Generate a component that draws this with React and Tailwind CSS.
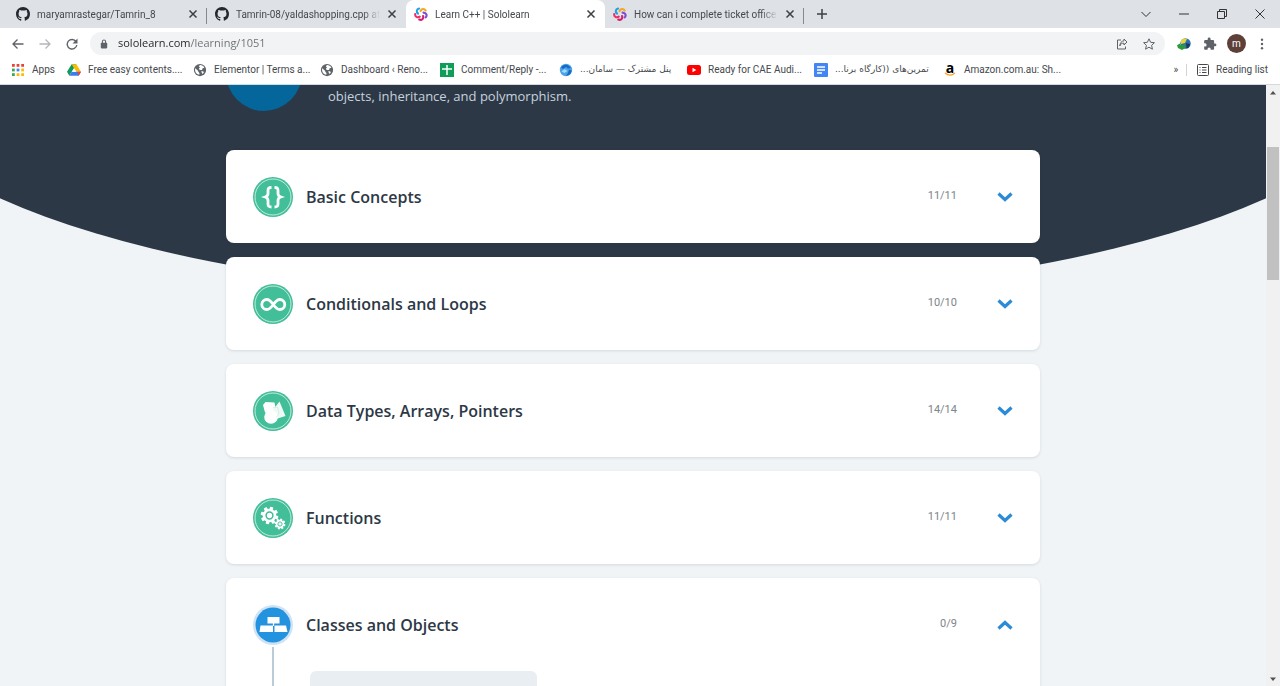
import { useState } from "react";

const UI_FONT = "font-['Roboto','DejaVu_Sans',sans-serif]";
const PAGE_FONT = "font-['Open_Sans',sans-serif]";

function GithubIcon() {
  return (
    <svg viewBox="0 0 16 16" className="size-3.5 shrink-0" fill="#24292f" aria-hidden="true">
      <path d="M8 0C3.58 0 0 3.58 0 8c0 3.54 2.29 6.53 5.47 7.59.4.07.55-.17.55-.38 0-.19-.01-.82-.01-1.49-2.01.37-2.53-.49-2.69-.94-.09-.23-.48-.94-.82-1.13-.28-.15-.68-.52-.01-.53.63-.01 1.08.58 1.23.82.72 1.21 1.87.87 2.33.66.07-.52.28-.87.51-1.07-1.78-.2-3.64-.89-3.64-3.95 0-.87.31-1.59.82-2.15-.08-.2-.36-1.02.08-2.12 0 0 .67-.21 2.2.82.64-.18 1.32-.27 2-.27s1.36.09 2 .27c1.53-1.04 2.2-.82 2.2-.82.44 1.1.16 1.92.08 2.12.51.56.82 1.27.82 2.15 0 3.07-1.87 3.75-3.65 3.95.29.25.54.73.54 1.48 0 1.07-.01 1.93-.01 2.2 0 .21.15.46.55.38A8.01 8.01 0 0 0 16 8c0-4.42-3.58-8-8-8z" />
    </svg>
  );
}

function SololearnIcon() {
  const petals = [
    ["#f8a51b", 10],
    ["#7b4fd0", 82],
    ["#d81b72", 154],
    ["#ee2f5f", 226],
    ["#1da1e8", 298],
  ];
  return (
    <svg viewBox="0 0 28 28" className="size-3.5 shrink-0" fill="none" strokeWidth="4.2" strokeLinecap="round" aria-hidden="true">
      {petals.map(([color, angle]) => (
        <path key={color} d="M12 8.500C13 3 18.500 1.500 22 5.500" stroke={color} transform={`rotate(${angle} 14 14)`} />
      ))}
    </svg>
  );
}

function DriveIcon() {
  return (
    <svg viewBox="0 0 24 22" className="size-3.5 shrink-0" aria-hidden="true">
      <path d="M8 1h8l-4 7-4.500 7L4 21 0 14z" fill="#0f9d58" />
      <path d="M8 1h8l8 13h-8z" fill="#fbbc04" />
      <path d="M8 14h16l-4 7H4z" fill="#3b7ded" />
      <path d="M18 14h6l-4 7z" fill="#ea4335" />
      <path d="M12 8l3.500 6h-7z" fill="#fff" />
    </svg>
  );
}

function GlobeIcon() {
  return (
    <svg viewBox="0 0 24 24" className="size-3.5 shrink-0" aria-hidden="true">
      <circle cx="12" cy="12" r="10.500" fill="#5f6368" />
      <path d="M3.500 12c0-1 .2-2 .5-3l5 4.500v1.500l2 2v3C6.500 20 3.500 16.500 3.500 12zM12 3.500c3.500 0 6 1.800 7.500 4.500l-3 1-1 3h-4l-1.500-2.500 2-1.500-2-2.500z" fill="#fff" />
      <path d="M14 14h3.500l1 2.500-2.500 2.500z" fill="#fff" />
    </svg>
  );
}

function SheetsIcon() {
  return (
    <svg viewBox="0 0 14 14" className="size-3.5 shrink-0" aria-hidden="true">
      <path d="M0 0h14v14H0z" fill="#0f9d58" />
      <path d="M7 2v10M2 6h10" stroke="#fff" strokeWidth="1.500" />
    </svg>
  );
}

function SwirlIcon() {
  return (
    <svg viewBox="0 0 14 14" className="size-3.5 shrink-0" aria-hidden="true">
      <circle cx="7" cy="7" r="6.200" fill="#4ba3ea" />
      <path d="M2 4.500c2-3 6-3.500 8-1.500l2 2-3 .5-2-1.500-3 2zM7 12.500c3 0 5.500-2 5.500-5L10 6.500 9 10z" fill="#1769c2" />
      <path d="M2.500 8.500l3-2.500 3 2-3 2z" fill="#a8d8fb" />
    </svg>
  );
}

function YoutubeIcon() {
  return (
    <svg viewBox="0 0 14 14" className="size-3.5 shrink-0" aria-hidden="true">
      <rect y="2" width="14" height="10" rx="2.500" fill="#f00" />
      <path d="M5.500 4.800v4.400L9.300 7z" fill="#fff" />
    </svg>
  );
}

function DocsIcon() {
  return (
    <svg viewBox="0 0 14 14" className="size-3.5 shrink-0" aria-hidden="true">
      <rect width="14" height="14" rx="1" fill="#4285f4" />
      <path d="M3 4h8M3 7h8M3 10h5" stroke="#fff" strokeWidth="1.400" />
    </svg>
  );
}

function AmazonIcon() {
  return (
    <span className="flex size-3.5 shrink-0 flex-col items-center" aria-hidden="true">
      <span className="font-['Open_Sans',sans-serif] text-sm/[9px] font-bold text-black">a</span>
      <svg viewBox="0 0 12 4" className="h-1 w-3" fill="none" stroke="#f7a11a" strokeWidth="1.300">
        <path d="M1 1c3 2.500 7 2.500 10 0" />
      </svg>
    </span>
  );
}

function AppsIcon() {
  const colors = ["#ea4335", "#ea4335", "#ea4335", "#34a853", "#4285f4", "#fbbc04", "#34a853", "#fbbc04", "#fbbc04"];
  return (
    <svg viewBox="0 0 13 13" className="size-3 shrink-0" aria-hidden="true">
      {colors.map((c, i) => (
        <rect key={i} x={(i % 3) * 5} y={Math.floor(i / 3) * 5} width="3" height="3" fill={c} />
      ))}
    </svg>
  );
}

function LineIcon({ d, className = "size-3", width = 1.5 }) {
  return (
    <svg viewBox="0 0 12 12" className={className} fill="none" stroke="currentColor" strokeWidth={width} aria-hidden="true">
      <path d={d} />
    </svg>
  );
}

const tabs = [
  { title: "maryamrastegar/Tamrin_8", icon: <GithubIcon />, divider: true },
  { title: "Tamrin-08/yaldashopping.cpp at", icon: <GithubIcon /> },
  { title: "Learn C++ | Sololearn", icon: <SololearnIcon />, active: true },
  { title: "How can i complete ticket office", icon: <SololearnIcon />, divider: true },
];

function Tab({ title, icon, active, divider }) {
  return (
    <div className={`relative flex h-7 w-[199px] min-w-0 items-center pr-2 pl-2 ${active ? "rounded-t-lg bg-white" : ""}`}>
      <button className="flex min-w-0 flex-1 items-center gap-[7px] text-left">
        {icon}
        <span className="flex-1 overflow-hidden text-[10px] whitespace-nowrap text-[#45494d] [mask-image:linear-gradient(to_right,black_88%,transparent)]">
          {title}
        </span>
      </button>
      <button aria-label={`Close ${title}`} className="ml-1.5 flex size-3 items-center justify-center text-[#3c4043]">
        <LineIcon d="M2.500 2.500l7 7M9.500 2.500l-7 7" />
      </button>
      {divider && <span className="absolute top-2 right-0 h-4 w-px bg-[#85898e]" />}
    </div>
  );
}

function TabStrip() {
  return (
    <div className="flex h-7 items-center bg-[#dee1e6] pl-2">
      {tabs.map((t) => (
        <Tab key={t.title} {...t} />
      ))}
      <button aria-label="New tab" className="ml-3 text-[#3c4043]">
        <LineIcon d="M6 1v10M1 6h10" />
      </button>
      <div className="ml-auto flex items-center gap-[26px] pr-3.5 text-[#333]">
        <button aria-label="Search tabs"><LineIcon d="M1.500 4l4.500 4.500L10.500 4" width={1} /></button>
        <button aria-label="Minimize"><LineIcon d="M1 6h10" width={1} /></button>
        <button aria-label="Restore"><LineIcon d="M1.500 3.500h7v7h-7zM3.500 3.500v-2h7v7h-2" width={1} /></button>
        <button aria-label="Close window"><LineIcon d="M1.500 1.500l9 9M10.500 1.500l-9 9" width={1} /></button>
      </div>
    </div>
  );
}

function Toolbar() {
  return (
    <div className="flex h-[31px] items-center bg-white pr-3 pl-3 text-[#5f6368]">
      <button aria-label="Back"><LineIcon d="M11.500 6H1M5.500 1.500L1 6l4.500 4.500" width={1.3} /></button>
      <button aria-label="Forward" className="ml-[15px] text-[#b4b7ba]"><LineIcon d="M.5 6H11M6.500 1.500L11 6l-4.500 4.500" width={1.3} /></button>
      <button aria-label="Reload" className="ml-[15px]">
        <svg viewBox="0 0 12 12" className="size-3" aria-hidden="true">
          <path d="M10 3.500A4.800 4.800 0 1 0 10.800 7" fill="none" stroke="currentColor" strokeWidth="1.400" />
          <path d="M11.500.5v5h-5z" fill="currentColor" />
        </svg>
      </button>
      <div className="ml-3 flex h-[23px] min-w-0 flex-1 items-center rounded-full bg-[#f1f3f4] pr-2.5 pl-2.5">
        <svg viewBox="0 0 10 12" className="h-2.5 w-2" aria-hidden="true">
          <rect x="1" y="4.500" width="8" height="7" rx="1" fill="currentColor" />
          <path d="M3 5V3a2 2 0 0 1 4 0v2" fill="none" stroke="currentColor" strokeWidth="1.300" />
        </svg>
        <input
          aria-label="Address"
          defaultValue="sololearn.com/learning/1051"
          className="ml-2.5 min-w-0 flex-1 bg-[linear-gradient(to_right,#202124_72px,#6b6f73_72px)] bg-clip-text font-['Open_Sans',sans-serif] text-[11px] text-transparent outline-none"
        />
        <button aria-label="Share" className="mr-[15px]">
          <LineIcon d="M5 2H1.500v9h8V8.500M8 1l3 3-3 3V5.200C5.500 5.200 4.500 6 3.800 8 4 4.800 5.500 3 8 2.800z" width={1} />
        </button>
        <button aria-label="Bookmark this page">
          <LineIcon d="M6 .8l1.600 3.500 3.800.4-2.800 2.600.8 3.900L6 9.200l-3.400 2 .8-3.900L.6 4.700l3.800-.4z" width={1} />
        </button>
      </div>
      <div className="ml-3 flex items-center">
        <button aria-label="Download manager">
          <svg viewBox="0 0 14 12" className="h-3 w-3.5" aria-hidden="true">
            <circle cx="8.500" cy="5.500" r="5.200" fill="#2f6fb5" />
            <path d="M4 2.500c2-2 5-2.500 6-1.500L8 5 4 6z" fill="#e6d832" />
            <path d="M9 5l4 1c0 2.500-1.500 4-3.500 4.500z" fill="#163a63" />
            <path d="M0 7.500l2.500-2L4 7.500l4-1 .5 3.500L5 12 1 10z" fill="#2d9b34" />
          </svg>
        </button>
        <button aria-label="Extensions" className="ml-3">
          <svg viewBox="0 0 24 24" className="size-3.5" fill="currentColor" aria-hidden="true">
            <path d="M20.500 11H19V7c0-1.100-.9-2-2-2h-4V3.500a2.500 2.500 0 0 0-5 0V5H4c-1.100 0-2 .9-2 2v3.800h1.500a2.700 2.700 0 0 1 0 5.400H2V20c0 1.100.9 2 2 2h3.800v-1.500a2.700 2.700 0 0 1 5.400 0V22H17c1.100 0 2-.9 2-2v-4h1.500a2.500 2.500 0 0 0 0-5z" />
          </svg>
        </button>
        <button aria-label="Profile" className="ml-2.5 flex size-[19px] items-center justify-center rounded-full bg-[#5d4037] text-[10px] leading-none text-white">m</button>
        <button aria-label="Menu" className="ml-2.5">
          <svg viewBox="0 0 12 12" className="size-3" fill="currentColor" aria-hidden="true">
            <circle cx="6" cy="1.800" r="1.200" /><circle cx="6" cy="6" r="1.200" /><circle cx="6" cy="10.200" r="1.200" />
          </svg>
        </button>
      </div>
    </div>
  );
}

const bookmarks = [
  { label: "Free easy contents....", icon: <DriveIcon />, box: "w-[126px]" },
  { label: "Elementor | Terms a...", icon: <GlobeIcon />, box: "w-[127px]" },
  { label: "Dashboard ‹ Reno...", icon: <GlobeIcon />, box: "w-[120px]" },
  { label: "Comment/Reply -...", icon: <SheetsIcon />, box: "w-[119px]" },
  { label: "پنل مشترک — سامان...", icon: <SwirlIcon />, box: "w-[128px]", rtl: true },
  { label: "Ready for CAE Audi...", icon: <YoutubeIcon />, box: "w-[127px]" },
  { label: "تمرین‌های ((کارگاه برنا...", icon: <DocsIcon />, box: "w-[129px]", rtl: true },
  { label: "Amazon.com.au: Sh...", icon: <AmazonIcon />, box: "w-[127px]" },
];

function BookmarksBar() {
  return (
    <nav aria-label="Bookmarks" className="flex h-[26px] items-center border-b border-[#d5d8dc] bg-white pb-1 pl-3 text-[10px] whitespace-nowrap text-[#45494d]">
      <a href="#apps" className="flex w-[55px] shrink-0 items-center gap-2">
        <AppsIcon />
        <span>Apps</span>
      </a>
      {bookmarks.map((b) => (
        <a key={b.label} href="#bookmark" className={`flex shrink-0 items-center gap-[7px] ${b.box}`}>
          {b.icon}
          <span dir={b.rtl ? "rtl" : "ltr"} className={b.rtl ? "font-['DejaVu_Sans',sans-serif] text-[9px]" : ""}>{b.label}</span>
        </a>
      ))}
      <div className="ml-auto flex items-center pr-3">
        <button aria-label="More bookmarks">»</button>
        <span className="ml-2 h-3 w-px bg-[#d0d3d7]" />
        <button className="ml-2.5 flex items-center gap-[7px]">
          <svg viewBox="0 0 12 12" className="size-3" fill="none" stroke="currentColor" aria-hidden="true">
            <rect x=".5" y=".5" width="11" height="11" rx="1" />
            <path d="M2.500 3.500h1M5 3.500h4.500M2.500 6h1M5 6h4.500M2.500 8.500h1M5 8.500h4.500" />
          </svg>
          <span>Reading list</span>
        </button>
      </div>
    </nav>
  );
}

function Badge({ children, active }) {
  return (
    <svg viewBox="0 0 40 40" className="size-10 shrink-0" aria-hidden="true">
      {active ? (
        <>
          <circle cx="20" cy="20" r="20" fill="#cfe3f4" />
          <circle cx="20" cy="20" r="17.500" fill="#2493df" />
        </>
      ) : (
        <>
          <circle cx="20" cy="20" r="20" fill="#42be98" />
          <circle cx="20" cy="20" r="18" fill="none" stroke="#c4eadd" strokeWidth="1" />
        </>
      )}
      {children}
    </svg>
  );
}

function Gear({ cx, cy, r, hole }) {
  return (
    <g transform={`translate(${cx} ${cy})`}>
      {[0, 45, 90, 135].map((a) => (
        <rect key={a} x={-r * 0.25} y={-r * 1.3} width={r * 0.5} height={r * 2.6} rx={r * 0.1} fill="#fff" transform={`rotate(${a + 15})`} />
      ))}
      <circle r={r} fill="#fff" />
      <circle r={hole} fill="#fff" stroke="#42be98" strokeWidth={hole * 0.45} />
    </g>
  );
}

const modules = [
  {
    title: "Basic Concepts",
    progress: "11/11",
    icon: (
      <Badge>
        <path d="M18.500 10.500c-3 0-3.500 1-3.500 3v3c0 1.800-.8 2.800-2.800 3.500 2 .7 2.800 1.700 2.800 3.500v3.500c0 2 .5 3 3.500 3M21.500 10.500c3 0 3.500 1 3.500 3v3c0 1.800.8 2.800 2.800 3.500-2 .7-2.800 1.700-2.800 3.500v3.500c0 2-.5 3-3.500 3" fill="none" stroke="#fff" strokeWidth="2.800" />
      </Badge>
    ),
  },
  {
    title: "Conditionals and Loops",
    progress: "10/10",
    icon: (
      <Badge>
        <path d="M20.300 20.500c-2.500-3.500-4.300-5-6.500-5a5 5 0 0 0 0 10c2.200 0 4-1.500 6.500-5s4.300-5 6.500-5a5 5 0 0 1 0 10c-2.200 0-4-1.500-6.500-5z" fill="none" stroke="#fff" strokeWidth="2.800" />
      </Badge>
    ),
  },
  {
    title: "Data Types, Arrays, Pointers",
    progress: "14/14",
    icon: (
      <Badge>
        <path d="M10 14l2.500-3 9 .5 1.500 8-3 3-8-1z" fill="#fff" />
        <path d="M26.500 10.500l6 14.500-9.500 3-4-8z" fill="#effaf6" />
        <circle cx="18" cy="26" r="6.800" fill="#fff" />
        <path d="M19.500 17l5-1 1.500 7-2.500 3" fill="none" stroke="#cdeee2" strokeWidth=".8" />
      </Badge>
    ),
  },
  {
    title: "Functions",
    progress: "11/11",
    icon: (
      <Badge>
        <Gear cx={16.5} cy={17.5} r={6.8} hole={3.4} />
        <Gear cx={27} cy={26} r={4.2} hole={2.1} />
      </Badge>
    ),
  },
  {
    title: "Classes and Objects",
    progress: "0/9",
    open: true,
    icon: (
      <Badge active>
        <path d="M14.500 12h12v6.500h-12zM7.500 20.500h12.500V27H6.500zM21.500 20.500H33l1.500 6.500h-13z" fill="#fff" />
        <path d="M20.500 18v3" stroke="#fff" strokeWidth="1.200" />
      </Badge>
    ),
  },
];

function ModuleCard({ module }) {
  const [open, setOpen] = useState(Boolean(module.open));
  return (
    <section className="rounded-lg bg-white shadow-[0_1px_3px_rgba(45,55,72,0.14)]">
      <h2>
        <button
          aria-expanded={open}
          onClick={() => setOpen(!open)}
          className="flex h-[93px] w-full items-center px-[27px] text-left"
        >
          {module.icon}
          <span className="ml-[13px] flex-1 text-base font-semibold text-[#2d3846]">{module.title}</span>
          <span className="font-['Roboto',sans-serif] text-[11px] text-[#7d848a]">{module.progress}</span>
          <svg viewBox="0 0 16 10" className={`ml-10 h-2.5 w-4 ${open ? "rotate-180" : ""}`} fill="none" stroke="#2b8bd6" strokeWidth="3.200" aria-hidden="true">
            <path d="M1.500 1.500L8 7.500l6.500-6" />
          </svg>
        </button>
      </h2>
      {open && (
        <div className="flex h-24 pl-[46px]">
          <div className="-mt-6 w-px border-l-2 border-[#bccbd8]" />
          <div className="ml-9 h-24 w-[227px] rounded-md bg-[#e9eef3]" />
        </div>
      )}
    </section>
  );
}

function Scrollbar() {
  return (
    <div className="flex w-3.5 shrink-0 flex-col items-center bg-[#f1f1f1]" aria-hidden="true">
      <svg viewBox="0 0 14 14" className="size-3.5" fill="#505050"><path d="M4 9.500h6L7 6z" /></svg>
      <div className="mt-12 h-[133px] w-3 bg-[#c1c1c1]" />
      <svg viewBox="0 0 14 14" className="mt-auto size-3.5" fill="#505050"><path d="M4 5.500h6L7 9z" /></svg>
    </div>
  );
}

export default function App() {
  return (
    <div className={`flex h-screen flex-col overflow-hidden ${UI_FONT}`}>
      <header className="shrink-0">
        <TabStrip />
        <Toolbar />
        <BookmarksBar />
      </header>
      <div className="flex min-h-0 flex-1">
        <main className={`relative min-w-0 flex-1 overflow-hidden bg-[#f0f4f7] ${PAGE_FONT}`}>
          <div className="absolute -top-[241px] -left-[10%] h-[456px] w-[120%] rounded-[50%] bg-[#2d3846]" />
          <div className="relative mx-auto w-full max-w-[814px]">
            <div className="flex h-[65px] items-start">
              <div className="h-[26px] w-[76px] overflow-hidden">
                <div className="-mt-[50px] size-[76px] rounded-full bg-[#04669a]" />
              </div>
              <p className="ml-[26px] text-[13px]/[22px] font-medium text-[#c5d2de]">objects, inheritance, and polymorphism.</p>
            </div>
            <div className="flex flex-col gap-3.5">
              {modules.map((m) => (
                <ModuleCard key={m.title} module={m} />
              ))}
            </div>
          </div>
        </main>
        <Scrollbar />
      </div>
    </div>
  );
}
